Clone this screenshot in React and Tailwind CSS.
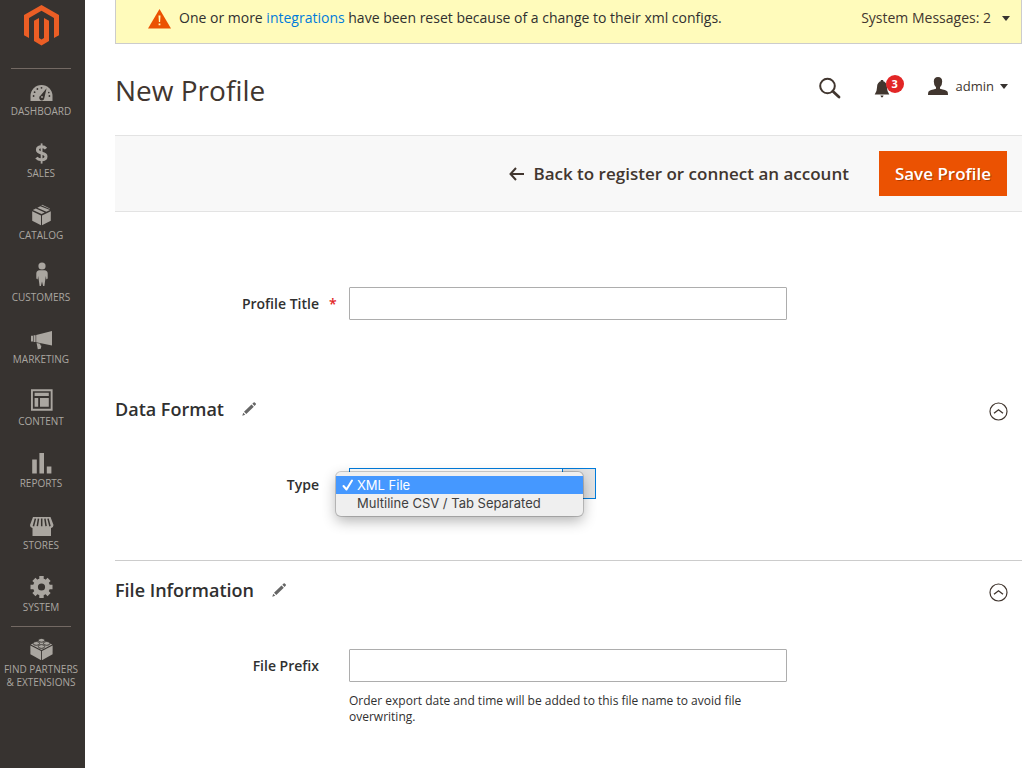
import React, { useState } from 'react';

const icons = {
  dashboard: (
    <>
      <path d="M2.5 25v-5a11 11 0 0 1 22 0v5z" fill="#aaa6a0" />
      <g fill="#373330">
        <circle cx="5.6" cy="20" r="0.9" />
        <circle cx="6.6" cy="16.2" r="0.9" />
        <circle cx="9.4" cy="13" r="0.9" />
        <circle cx="13.5" cy="11.8" r="0.9" />
        <circle cx="21.4" cy="20" r="0.9" />
        <circle cx="20.8" cy="16.6" r="0.8" />
        <path d="M18.6 12.2l-2.2 9.6a2.6 2.6 0 1 1-3.8-2.2z" />
      </g>
      <circle cx="14" cy="21" r="0.9" fill="#aaa6a0" />
    </>
  ),
  sales: (
    <g fill="none" stroke="#aaa6a0">
      <path d="M18 10.6c-1-1.200-2.600-1.900-4.400-1.900-2.600 0-4.200 1.300-4.200 3.100 0 4.600 8.600 2.400 8.600 6.600 0 2-1.900 3.300-4.600 3.300-2.200 0-3.900-.8-5-2.100" strokeWidth="3" />
      <path d="M13.600 5.400v20.200" strokeWidth="1.800" />
    </g>
  ),
  catalog: (
    <g fill="#aaa6a0">
      <path d="M4.2 11.2l8.8 4.3v9.8l-8.8-4.5z" />
      <path d="M22.8 11.2l-8.8 4.3v9.8l8.8-4.5z" />
      <path d="M4.8 9.9l3-1.5 8.9 4-3.2 1.7z" />
      <path d="M9.3 7.7l3-1.4 9.7 3.6-3.6 1.8z" />
      <path d="M13.2 5.3l1-.5 7.7 3.8v.4z" />
    </g>
  ),
  customers: (
    <g fill="#aaa6a0">
      <circle cx="14" cy="4" r="3.6" />
      <path d="M11.5 8.2h5q3 .2 3.2 3.2v4.8q-.4 1.2-1.4 1l-.4-3.2-.6 3.6-.9 6.4h-1.3L14 19.4 12.9 24h-1.3l-.9-6.4-.6-3.6-.4 3.2q-1 .2-1.4-1v-4.8q.2-3 3.2-3.2z" />
    </g>
  ),
  marketing: (
    <g fill="#aaa6a0">
      <path d="M3 11.8h2v5.6H3zM5.6 11.3h2v6.800h-2z" />
      <path d="M8.2 11.1L24 7v14.4L8.2 18.2z" />
      <path d="M8.6 19l3.6.8.2 1.4 1 .6-.6 3-3 .4z" />
    </g>
  ),
  content: (
    <g fill="#aaa6a0">
      <path d="M3 3.3h21.6v21.4H3zM4.9 5.2v17.6h17.8V5.2z" fillRule="evenodd" />
      <path d="M6.6 6.7h14.2v3.4H6.6zM6.6 12h3.6v8.800H6.6zM12 12h8.8v8.800H12z" />
    </g>
  ),
  reports: <path d="M4.2 11.6h4.6v14H4.2zM11.4 5h4.600v20.600h-4.600zM18.800 18.600h4.600v7h-4.600z" fill="#aaa6a0" />,
  stores: (
    <g fill="#aaa6a0">
      <path d="M4.500 18h18.500v8H4.500z" />
      <path d="M5 7h17.500l3 8q0 2.600-2.300 3H4.300Q2 17.600 2 15z" />
      <g stroke="#373330" strokeWidth="1.500">
        <path d="M7.400 8.600l-2 7.600M10.500 8.600l-1.200 7.600M13.700 8.600v7.600M16.900 8.600l1.200 7.600M20 8.600l2 7.600" />
      </g>
    </g>
  ),
  system: (
    <g>
      <circle cx="13.5" cy="15" r="6" fill="none" stroke="#aaa6a0" strokeWidth="4.800" />
      <g stroke="#aaa6a0" strokeWidth="4.400">
        <path d="M13.500 4v4M13.500 22v4M2.500 15h4M20.500 15h4M5.900 7.400l2.600 2.600M18.500 20l2.600 2.600M5.900 22.600l2.600-2.600M18.500 10l2.600-2.600" />
      </g>
    </g>
  ),
  partners: (
    <g fill="#aaa6a0">
      <path d="M2.400 11.600l10.700 5.400v9.200L2.400 20.200z" />
      <path d="M24.600 11.600L14 17v9.200l10.600-6z" />
      <path d="M2.800 10.600L13.500 5.200l10.700 5.400-10.700 5.500z" />
      <g stroke="#373330" strokeWidth="0.900">
        <ellipse cx="13.500" cy="6.300" rx="3.200" ry="1.900" />
        <ellipse cx="8.300" cy="9.400" rx="3.200" ry="1.900" />
        <ellipse cx="18.700" cy="9.400" rx="3.200" ry="1.900" />
        <ellipse cx="13.500" cy="12.500" rx="3.200" ry="1.900" />
      </g>
    </g>
  ),
};

const menu = [
  { icon: 'dashboard', label: 'DASHBOARD' },
  { icon: 'sales', label: 'SALES' },
  { icon: 'catalog', label: 'CATALOG' },
  { icon: 'customers', label: 'CUSTOMERS' },
  { icon: 'marketing', label: 'MARKETING' },
  { icon: 'content', label: 'CONTENT' },
  { icon: 'reports', label: 'REPORTS' },
  { icon: 'stores', label: 'STORES' },
  { icon: 'system', label: 'SYSTEM' },
];

const fileTypes = [
  { value: 'xml', label: 'XML File' },
  { value: 'csv', label: 'Multiline CSV / Tab Separated' },
];

const MenuItem = ({ icon, label }) => (
  <a href="#" className="flex flex-col items-center pt-[7px] pb-[13px] text-center text-[10px] leading-[13px] text-[#aaa6a0]">
    <svg width="27" height="26" viewBox="0 0 27 26" className="mb-[3px]" aria-hidden="true">{icons[icon]}</svg>
    {label}
  </a>
);

const Sidebar = () => (
  <nav className="w-[85px] shrink-0 bg-[#373330] pr-[3px]">
    <a href="#" aria-label="Home" className="flex h-[68px] justify-center pt-[5px]">
      <svg width="35" height="41" viewBox="0 0 35 41" fill="#eb5e25">
        <path d="M17.500 0L35 10v20.200l-5 2.900V12.900L17.500 5.700 5 12.900v20.200l-5-2.900V10z" />
        <path d="M10 15.800l5-2.900v20.200l2.500 1.500 2.500-1.500V12.900l5 2.900v20.200L17.500 40.400 10 36z" />
      </svg>
    </a>
    <hr className="mx-[11px] border-[#736963]" />
    {menu.map(item => <MenuItem key={item.icon} {...item} />)}
    <hr className="mx-[11px] -mt-px border-[#736963]" />
    <MenuItem icon="partners" label={<span>FIND PARTNERS<br />&amp; EXTENSIONS</span>} />
  </nav>
);

const Caret = () => (
  <svg width="8" height="5" viewBox="0 0 8 5" fill="#373330" aria-hidden="true"><path d="M0 0h8L4 5z" /></svg>
);

const MessageBar = () => (
  <div className="flex h-11 items-start justify-between border border-t-0 border-[#cccccc] bg-[#fffbbb] pt-2 pr-[11px] pl-8 text-[14px] leading-5">
    <p className="flex gap-2">
      <svg width="23" height="20" viewBox="0 0 23 20" className="mt-px" aria-hidden="true">
        <path d="M11.500 0L23 19.500H0z" fill="#eb5202" />
        <path d="M10.500 6.500h2l-.4 6.500h-1.200zM10.600 14.500h1.800v1.800h-1.800z" fill="#fffbbb" />
      </svg>
      <span>One or more <a href="#" className="text-[#007bdb]">integrations</a> have been reset because of a change to their xml configs.</span>
    </p>
    <button className="flex items-center gap-[11px] text-[#41362f]">System Messages: 2 <Caret /></button>
  </div>
);

const PageHeader = () => (
  <header className="flex h-[91px] items-center justify-between pr-[14px]">
    <h1 className="text-[28px] leading-9 text-[#41362f]">New Profile</h1>
    <div className="flex items-center pb-1 text-[#41362f]">
      <button aria-label="Search" className="mr-[33px]">
        <svg width="22" height="22" viewBox="0 0 22 22" fill="none" stroke="#41362f">
          <circle cx="8.500" cy="9" r="7.300" strokeWidth="2" />
          <path d="M13.800 14.300l6.200 5.700" strokeWidth="2.800" strokeLinecap="round" />
        </svg>
      </button>
      <button aria-label="Notifications" className="relative mr-[38px] h-4 w-4">
        <svg width="16" height="18" viewBox="0 0 16 18" fill="#41362f">
          <path d="M8 1q5 .5 5 6.500 0 4 2.300 7H.7Q3 11.500 3 7.500 3 1.500 8 1z" />
          <path d="M6.800 0h2.400v2H6.800zM6.400 15.600h3.200Q9 17.600 8 17.600t-1.600-2z" />
        </svg>
        <span className="absolute -top-[5px] left-3 h-[18px] w-[18px] rounded-full bg-[#e22626] text-center text-[11px] leading-[18px] font-bold text-white">3</span>
      </button>
      <button className="flex items-center pb-[3px] text-[13px] leading-5">
        <svg width="20" height="18" viewBox="0 0 20 18" fill="#41362f" className="mr-2" aria-hidden="true">
          <path d="M10 0q4.200.2 4.200 4.400 0 4-2.200 5.800v1.600q6 1.200 7.400 2.800.6 1 .6 3.400H0q0-2.400.6-3.400Q2 13 8 11.800v-1.600Q5.800 8.400 5.800 4.400 5.800.2 10 0z" />
        </svg>
        <span className="mr-[6px]">admin</span>
        <Caret />
      </button>
    </div>
  </header>
);

const ActionBar = () => (
  <div className="flex h-[77px] items-center justify-end gap-[30px] border-y border-[#e3e3e3] bg-[#f8f8f8] pr-[15px] text-[17px] leading-6 font-semibold">
    <button className="flex items-center gap-[9px] text-[#41362f]">
      <svg width="15" height="14" viewBox="0 0 15 14" fill="none" stroke="#41362f" strokeWidth="2" aria-hidden="true">
        <path d="M7 1L1.500 7 7 13M1.500 7H15" />
      </svg>
      Back to register or connect an account
    </button>
    <button className="h-[45px] bg-[#eb5202] px-4 text-white [text-shadow:1px_1px_0_rgba(0,0,0,0.25)]">Save Profile</button>
  </div>
);

const Field = ({ id, label, required, note, children }) => (
  <div className="flex items-start gap-[30px]">
    <label htmlFor={id} className="relative w-[204px] shrink-0 text-right text-[14px] leading-[33px] font-semibold">
      {label}
      {required && <span className="absolute left-full ml-[10px] text-[#e22626]">*</span>}
    </label>
    <div className="w-full max-w-[438px]">
      {children}
      {note && <p className="mt-[11px] text-[12px] leading-4">{note}</p>}
    </div>
  </div>
);

const TextInput = ({ id }) => (
  <input id={id} type="text" className="block h-[33px] w-full rounded-[1px] border border-[#adadad] bg-white px-[9px] text-[14px]" />
);

const TypeSelect = () => {
  const [value, setValue] = useState('xml');

  return (
    <div className="relative h-[31px] w-[247px]">
      <select
        id="type"
        value={value}
        onChange={e => setValue(e.target.value)}
        className="h-full w-full appearance-none border border-[#007bdb] bg-white px-[9px] text-[14px]"
      >
        {fileTypes.map(type => <option key={type.value} value={type.value}>{type.label}</option>)}
      </select>
      <span className="absolute top-px right-px bottom-px w-[33px] border-l border-[#007bdb] bg-[#e3e3e3]" />
      <ul
        role="listbox"
        aria-label="Type"
        className="absolute top-1 -left-[13px] w-[247px] rounded-[5px] bg-[#efefef] py-1 font-['Inter',sans-serif] text-[13px] leading-[18px] shadow-[0_0_0_1px_rgba(0,0,0,0.18),0_5px_14px_rgba(0,0,0,0.3)]"
      >
        {fileTypes.map(type => (
          <li
            key={type.value}
            role="option"
            aria-selected={type.value === value}
            onClick={() => setValue(type.value)}
            className="flex items-center pl-[6px] text-[#404040] aria-selected:bg-[#4598ff] aria-selected:text-white"
          >
            <svg width="12" height="12" viewBox="0 0 12 12" fill="none" stroke="#ffffff" strokeWidth="2" strokeLinecap="round" strokeLinejoin="round" className="mr-[3px]" aria-hidden="true">
              {type.value === value && <path d="M1.500 7l3 3.500L10 1.500" />}
            </svg>
            {type.label}
          </li>
        ))}
      </ul>
    </div>
  );
};

const Section = ({ title, children, className }) => (
  <section className={className}>
    <div className="flex items-end justify-between pt-[17px] pr-[14px] pb-[47px]">
      <h2 className="flex items-center gap-[18px] text-[18px] leading-6 font-semibold">
        {title}
        <svg width="14" height="14" viewBox="0 0 14 14" fill="#666666" aria-hidden="true">
          <path d="M.3 13.700l.9-3 2.100 2.100zM2 9.800l7.500-7.300 2.300 2.300L4.300 12.100zM10.300 1.700L11.600.4q.6-.5 1.200 0l1 1q.5.600 0 1.200l-1.200 1.400z" />
        </svg>
      </h2>
      <button aria-label={`Collapse ${title}`}>
        <svg width="19" height="19" viewBox="0 0 19 19" fill="none" stroke="#41362f" className="block">
          <circle cx="9.500" cy="9.500" r="8.500" strokeWidth="1.200" />
          <path d="M5 11.200l4.500-3.400 4.500 3.400" strokeWidth="1.400" />
        </svg>
      </button>
    </div>
    {children}
  </section>
);

export default function App() {
  return (
    <div className="flex min-h-screen bg-white font-['Open_Sans',sans-serif] text-[#303030]">
      <Sidebar />
      <main className="min-w-0 flex-1 pr-[2px] pl-[30px]">
        <MessageBar />
        <PageHeader />
        <ActionBar />
        <form className="pt-[75px]">
          <Field id="profile-title" label="Profile Title" required>
            <TextInput id="profile-title" />
          </Field>
          <Section title="Data Format" className="mt-[60px] pb-[59px]">
            <Field id="type" label="Type">
              <TypeSelect />
            </Field>
          </Section>
          <Section title="File Information" className="border-t border-[#cccccc]">
            <Field
              id="file-prefix"
              label="File Prefix"
              note="Order export date and time will be added to this file name to avoid file overwriting."
            >
              <TextInput id="file-prefix" />
            </Field>
          </Section>
        </form>
      </main>
    </div>
  );
}
